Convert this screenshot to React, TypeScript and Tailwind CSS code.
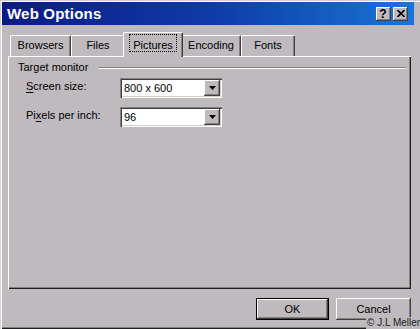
import type { ReactNode } from "react";

const raised =
	"shadow-[inset_-1px_-1px_0_#404040,inset_1px_1px_0_#ffffff,inset_-2px_-2px_0_#808080]";
const sunken =
	"shadow-[inset_1px_1px_0_#808080,inset_2px_2px_0_#404040,inset_-1px_-1px_0_#ffffff,inset_-2px_-2px_0_#d4d0c8]";

function Tab({ label, width }: { label: string; width: string }) {
	return (
		<div
			className={`${width} h-[21px] flex justify-center pt-[3px] border-l border-t border-white border-r border-r-[#404040] rounded-t-[2px] shadow-[inset_-1px_0_0_#808080]`}
		>
			<span className="leading-[13px]">{label}</span>
		</div>
	);
}

function Combo({ value }: { value: string }) {
	return (
		<div className={`w-[102px] h-[20px] bg-white flex items-center ${sunken}`}>
			<span className="flex-1 pl-[4px] leading-[13px]">{value}</span>
			<div
				className={`w-[16px] h-[16px] mr-[2px] bg-[#bebabe] flex items-center justify-center ${raised}`}
			>
				<svg width="7" height="4" viewBox="0 0 7 4">
					<path d="M0 0h7L3.5 4z" fill="#000" />
				</svg>
			</div>
		</div>
	);
}

function Row({ label, value }: { label: ReactNode; value: string }) {
	return (
		<div className="flex items-start pl-[18px]">
			<span className="w-[94px] pt-[2px] leading-[13px]">{label}</span>
			<Combo value={value} />
		</div>
	);
}

export default function App() {
	return (
		<div className="relative w-[420px] h-[329px] overflow-hidden bg-[#bebabe] text-[11px] text-black font-['Liberation_Sans',Arial,sans-serif] shadow-[inset_1px_1px_0_#d4d0d4,inset_2px_2px_0_#ffffff,inset_0_-1px_0_#202020,inset_0_-2px_0_#808080]">
			{/* Title bar */}
			<div className="mt-[2px] ml-[2px] w-[412px] h-[23px] flex items-center justify-between pl-[5px] pr-[6px] bg-linear-to-r from-[#0c1a84] via-[#0f3aa8] to-[#1c74d6]">
				<span className="text-white font-bold text-[15px] leading-[18px] tracking-[0.2px]">
					Web Options
				</span>
				<div className="flex gap-[2px]">
					<div
						className={`w-[15px] h-[14px] bg-[#bebabe] flex items-center justify-center ${raised}`}
					>
						<span className="font-bold text-[12px] leading-[12px] ml-[-1px]">?</span>
					</div>
					<div
						className={`w-[15px] h-[14px] bg-[#bebabe] flex items-center justify-center ${raised}`}
					>
						<svg width="8" height="7" viewBox="0 0 8 7">
							<path d="M0.5 0L7.5 7M7.5 0L0.5 7" stroke="#000" strokeWidth="1.6" />
						</svg>
					</div>
				</div>
			</div>

			{/* Tabs */}
			<div className="mt-[7px] pl-[10px] flex items-end">
				<Tab label="Browsers" width="w-[61px]" />
				<Tab label="Files" width="w-[54px]" />
				<div className="relative z-10 -mx-[2px] -mb-px w-[60px] h-[25px] flex justify-center pt-px bg-[#bebabe] border-l border-t border-white border-r border-r-[#404040] rounded-t-[2px] shadow-[inset_-1px_0_0_#808080]">
					<span className="h-[18px] px-[4px] pt-[5px] leading-[13px] outline-1 outline-dotted outline-black -outline-offset-1">
						Pictures
					</span>
				</div>
				<Tab label="Encoding" width="w-[60px]" />
				<Tab label="Fonts" width="w-[54px]" />
			</div>

			{/* Panel */}
			<div className="ml-[8px] w-[403px] h-[233px] pt-[5px] shadow-[inset_1px_1px_0_#ffffff,inset_-1px_-1px_0_#202020,inset_-2px_-2px_0_#808080]">
				<div className="flex items-center pl-[10px] pr-[5px]">
					<span className="leading-[13px]">Target monitor</span>
					<div className="flex-1 ml-[11px] h-[2px] border-t border-[#808080] border-b border-b-white" />
				</div>
				<div className="mt-[4px] flex flex-col gap-[9px]">
					<Row
						label={
							<>
								<span className="underline underline-offset-2">S</span>creen size:
							</>
						}
						value="800 x 600"
					/>
					<Row
						label={
							<>
								Pi<span className="underline underline-offset-2">x</span>els per inch:
							</>
						}
						value="96"
					/>
				</div>
			</div>

			{/* Buttons */}
			<div className="mt-[9px] pr-[9px] flex justify-end gap-[7px]">
				<div className="w-[73px] h-[22px] border border-black">
					<div className={`w-full h-full flex items-center justify-center ${raised}`}>
						<span className="leading-[13px]">OK</span>
					</div>
				</div>
				<div className={`w-[75px] h-[22px] flex items-center justify-center ${raised}`}>
					<span className="leading-[13px]">Cancel</span>
				</div>
			</div>

			<span className="absolute left-[366px] top-[317px] whitespace-nowrap text-[10px] leading-[12px] text-[#202020] bg-[#bebabe] pl-[1px]">
				© J.L Meller
			</span>
		</div>
	);
}
